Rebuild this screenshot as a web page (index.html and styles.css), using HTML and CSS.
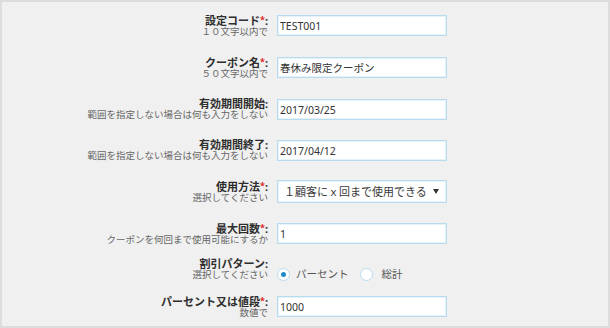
FILE: index.html
```html
<!DOCTYPE html>
<html lang="ja">
<head>
    <meta charset="UTF-8">
    <meta name="viewport" content="width=device-width, initial-scale=1.0">
    <title>クーポン設定</title>
    <link rel="stylesheet" href="styles.css">
</head>
<body>
    <div class="frame">
        <form class="coupon-form">
            <div class="field">
                <label class="field-label" for="code">
                    <span class="title">設定コード<span class="req">*</span>:</span>
                    <span class="hint">１０文字以内で</span>
                </label>
                <input type="text" class="text" id="code" value="TEST001">
            </div>
            <div class="field">
                <label class="field-label" for="name">
                    <span class="title">クーポン名<span class="req">*</span>:</span>
                    <span class="hint">５０文字以内で</span>
                </label>
                <input type="text" class="text" id="name" value="春休み限定クーポン">
            </div>
            <div class="field">
                <label class="field-label" for="start">
                    <span class="title">有効期間開始:</span>
                    <span class="hint">範囲を指定しない場合は何も入力をしない</span>
                </label>
                <input type="text" class="text" id="start" value="2017/03/25">
            </div>
            <div class="field">
                <label class="field-label" for="end">
                    <span class="title">有効期間終了:</span>
                    <span class="hint">範囲を指定しない場合は何も入力をしない</span>
                </label>
                <input type="text" class="text" id="end" value="2017/04/12">
            </div>
            <div class="field">
                <label class="field-label" for="usage">
                    <span class="title">使用方法<span class="req">*</span>:</span>
                    <span class="hint">選択してください</span>
                </label>
                <select class="select" id="usage">
                    <option>１顧客にｘ回まで使用できる</option>
                    <option>何回でも使用できる</option>
                </select>
            </div>
            <div class="field">
                <label class="field-label" for="max">
                    <span class="title">最大回数<span class="req">*</span>:</span>
                    <span class="hint">クーポンを何回まで使用可能にするか</span>
                </label>
                <input type="text" class="text" id="max" value="1">
            </div>
            <div class="field choice">
                <div class="field-label">
                    <span class="title">割引パターン:</span>
                    <span class="hint">選択してください</span>
                </div>
                <div class="radios">
                    <label class="radio"><input type="radio" name="pattern" checked> パーセント</label>
                    <label class="radio"><input type="radio" name="pattern"> 総計</label>
                </div>
            </div>
            <div class="field">
                <label class="field-label" for="amount">
                    <span class="title">パーセント又は値段<span class="req">*</span>:</span>
                    <span class="hint">数値で</span>
                </label>
                <input type="text" class="text" id="amount" value="1000">
            </div>
        </form>
    </div>
</body>
</html>
```

FILE: styles.css
```css
:root {
    --frame-border: #dcdcdc;
    --background-color: #f0f0f0;
    --text-color: #333333;
    --hint-color: #666666;
    --input-border: #b9dbee;
    --accent: #1e8cc8;
}
* {
    box-sizing: border-box;
}
body {
    margin: 0;
    font-family: "Noto Sans", "Noto Sans CJK JP", sans-serif;
    color: var(--text-color);
}
.frame {
    width: 610px;
    height: 328px;
    border: 2px solid var(--frame-border);
    background-color: var(--background-color);
    overflow: hidden;
}
.coupon-form {
    padding-top: 12px;
}
.field {
    display: grid;
    grid-template-columns: 266px 170px;
    column-gap: 9px;
    align-items: start;
    margin-bottom: 19px;
}
.field.choice {
    margin-top: -6px;
    margin-bottom: 14px;
}
.field-label {
    display: flex;
    flex-direction: column;
    align-items: flex-end;
    text-align: right;
    white-space: nowrap;
}
.title {
    font-size: 11px;
    line-height: 12px;
    font-weight: 700;
    color: #2e2e2e;
}
.req {
    color: #e02020;
    font-size: 9px;
    vertical-align: 2px;
}
.hint {
    font-size: 9.5px;
    line-height: 10px;
    color: var(--hint-color);
}
.text, .select {
    margin-top: 1px;
    width: 170px;
    height: 21px;
    padding: 0 2px;
    border: 1px solid var(--input-border);
    border-radius: 0;
    background-color: #ffffff;
    box-shadow: inset 0 0 0 1px #e6f2f9;
    font-family: "Noto Sans", "Noto Sans CJK JP", sans-serif;
    font-size: 10.5px;
    color: var(--text-color);
    outline: none;
}
.select {
    margin-top: 0;
    height: 23px;
    padding: 0 20px 0 6px;
    font-size: 11px;
    color: #3a3a3a;
    appearance: none;
    background-image: url("data:image/svg+xml,%3Csvg xmlns='http://www.w3.org/2000/svg' width='6' height='5' viewBox='0 0 6 5'%3E%3Cpolygon points='0,0 6,0 3,5' fill='%23333'/%3E%3C/svg%3E");
    background-repeat: no-repeat;
    background-position: right 7px center;
    background-size: 6px 5px;
}
.radios {
    display: flex;
    align-items: center;
    gap: 11px;
    padding-top: 9px;
}
.radio {
    display: flex;
    align-items: center;
    gap: 6px;
    font-size: 10.5px;
    line-height: 14px;
    color: #555555;
}
.radio input {
    appearance: none;
    margin: 0;
    width: 13px;
    height: 13px;
    border: 1px solid var(--input-border);
    border-radius: 50%;
    background-color: #ffffff;
    position: relative;
}
.radio input:checked::after {
    content: '';
    position: absolute;
    top: 3px;
    left: 3px;
    width: 5px;
    height: 5px;
    border-radius: 50%;
    background-color: var(--accent);
}
.radio + .radio input {
    margin-right: 3px;
}
```
